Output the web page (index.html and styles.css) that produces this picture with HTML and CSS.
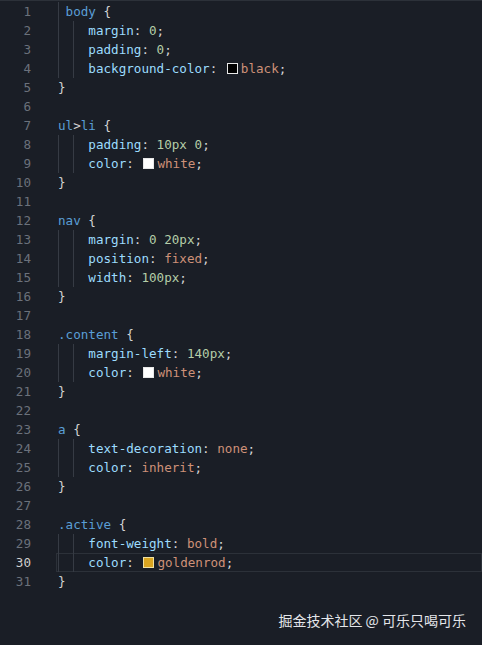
FILE: index.html
```html
<!DOCTYPE html>
<html>
<head>
<meta charset="utf-8">
<link rel="stylesheet" href="styles.css">
</head>
<body>
<div class="editor">
  <div class="row"><span class="ln">1</span><div class="code"><span class="ind one"></span><span class="sel">body</span> <span class="p">{</span></div></div>
  <div class="row"><span class="ln">2</span><div class="code"><span class="ind"></span><span class="prop">margin</span><span class="p">:</span> <span class="num">0</span><span class="p">;</span></div></div>
  <div class="row"><span class="ln">3</span><div class="code"><span class="ind"></span><span class="prop">padding</span><span class="p">:</span> <span class="num">0</span><span class="p">;</span></div></div>
  <div class="row"><span class="ln">4</span><div class="code"><span class="ind"></span><span class="prop">background-color</span><span class="p">:</span> <span class="sw sw-black"></span><span class="val">black</span><span class="p">;</span></div></div>
  <div class="row"><span class="ln">5</span><div class="code"><span class="p">}</span></div></div>
  <div class="row"><span class="ln">6</span><div class="code"></div></div>
  <div class="row"><span class="ln">7</span><div class="code"><span class="sel">ul</span><span class="p">&gt;</span><span class="sel">li</span> <span class="p">{</span></div></div>
  <div class="row"><span class="ln">8</span><div class="code"><span class="ind"></span><span class="prop">padding</span><span class="p">:</span> <span class="num">10px</span> <span class="num">0</span><span class="p">;</span></div></div>
  <div class="row"><span class="ln">9</span><div class="code"><span class="ind"></span><span class="prop">color</span><span class="p">:</span> <span class="sw sw-white"></span><span class="val">white</span><span class="p">;</span></div></div>
  <div class="row"><span class="ln">10</span><div class="code"><span class="p">}</span></div></div>
  <div class="row"><span class="ln">11</span><div class="code"></div></div>
  <div class="row"><span class="ln">12</span><div class="code"><span class="sel">nav</span> <span class="p">{</span></div></div>
  <div class="row"><span class="ln">13</span><div class="code"><span class="ind"></span><span class="prop">margin</span><span class="p">:</span> <span class="num">0</span> <span class="num">20px</span><span class="p">;</span></div></div>
  <div class="row"><span class="ln">14</span><div class="code"><span class="ind"></span><span class="prop">position</span><span class="p">:</span> <span class="val">fixed</span><span class="p">;</span></div></div>
  <div class="row"><span class="ln">15</span><div class="code"><span class="ind"></span><span class="prop">width</span><span class="p">:</span> <span class="num">100px</span><span class="p">;</span></div></div>
  <div class="row"><span class="ln">16</span><div class="code"><span class="p">}</span></div></div>
  <div class="row"><span class="ln">17</span><div class="code"></div></div>
  <div class="row"><span class="ln">18</span><div class="code"><span class="sel">.content</span> <span class="p">{</span></div></div>
  <div class="row"><span class="ln">19</span><div class="code"><span class="ind"></span><span class="prop">margin-left</span><span class="p">:</span> <span class="num">140px</span><span class="p">;</span></div></div>
  <div class="row"><span class="ln">20</span><div class="code"><span class="ind"></span><span class="prop">color</span><span class="p">:</span> <span class="sw sw-white"></span><span class="val">white</span><span class="p">;</span></div></div>
  <div class="row"><span class="ln">21</span><div class="code"><span class="p">}</span></div></div>
  <div class="row"><span class="ln">22</span><div class="code"></div></div>
  <div class="row"><span class="ln">23</span><div class="code"><span class="sel">a</span> <span class="p">{</span></div></div>
  <div class="row"><span class="ln">24</span><div class="code"><span class="ind"></span><span class="prop">text-decoration</span><span class="p">:</span> <span class="val">none</span><span class="p">;</span></div></div>
  <div class="row"><span class="ln">25</span><div class="code"><span class="ind"></span><span class="prop">color</span><span class="p">:</span> <span class="val">inherit</span><span class="p">;</span></div></div>
  <div class="row"><span class="ln">26</span><div class="code"><span class="p">}</span></div></div>
  <div class="row"><span class="ln">27</span><div class="code"></div></div>
  <div class="row"><span class="ln">28</span><div class="code"><span class="sel">.active</span> <span class="p">{</span></div></div>
  <div class="row"><span class="ln">29</span><div class="code"><span class="ind"></span><span class="prop">font-weight</span><span class="p">:</span> <span class="val">bold</span><span class="p">;</span></div></div>
  <div class="row current"><span class="ln">30</span><div class="code"><span class="ind"></span><span class="prop">color</span><span class="p">:</span> <span class="sw sw-gold"></span><span class="val">goldenrod</span><span class="p">;</span></div></div>
  <div class="row"><span class="ln">31</span><div class="code"><span class="p">}</span></div></div>
</div>
<div class="watermark">掘金技术社区 @ 可乐只喝可乐</div>
</body>
</html>
```
FILE: styles.css
```css
html, body {
  margin: 0;
  padding: 0;
}
body {
  background: #1a1e26;
  width: 482px;
  height: 645px;
  overflow: hidden;
  position: relative;
  font-family: "DejaVu Sans Mono", "Liberation Mono", monospace;
  font-size: 12.6px;
}
.editor {
  border-top: 1px solid #2c3139;
  padding-top: 1px;
}
.row {
  display: flex;
  height: 19px;
  line-height: 19px;
  white-space: pre;
}
.ln {
  width: 31px;
  text-align: right;
  color: #6b717b;
  flex: none;
}
.code {
  margin-left: 25px;
  padding-left: 2px;
  flex: 1;
  color: #d4d4d4;
}
.current .ln {
  color: #d0d0d0;
}
.current .code {
  box-shadow: inset 0 0 0 1px #2c3139;
}
.ind {
  display: inline-block;
  width: 4ch;
  height: 19px;
  vertical-align: top;
  background-image: linear-gradient(#363b44, #363b44), linear-gradient(#363b44, #363b44);
  background-size: 1px 100%, 1px 100%;
  background-position: 0 0, 2ch 0;
  background-repeat: no-repeat;
}
.ind.one {
  width: 1ch;
  background-image: linear-gradient(#363b44, #363b44);
  background-size: 1px 100%;
  background-position: 0 0;
}
.sel { color: #5a9fd6; }
.prop { color: #9cdcfe; }
.val { color: #ce9178; }
.num { color: #b5cea8; }
.p { color: #d4d4d4; }
.sw {
  display: inline-block;
  box-sizing: border-box;
  width: 11px;
  height: 11px;
  border: 1px solid #e8e8e8;
  margin: 0 3px 0 2px;
  vertical-align: -1px;
}
.sw-black { background: #000; }
.sw-white { background: #fff; }
.sw-gold { background: #daa520; border-color: #f0e0a0; }
.watermark {
  position: absolute;
  right: 16px;
  top: 610px;
  font-family: "Noto Sans CJK SC", "Noto Sans", sans-serif;
  font-size: 14px;
  color: #e4e6ea;
  white-space: nowrap;
}
```
